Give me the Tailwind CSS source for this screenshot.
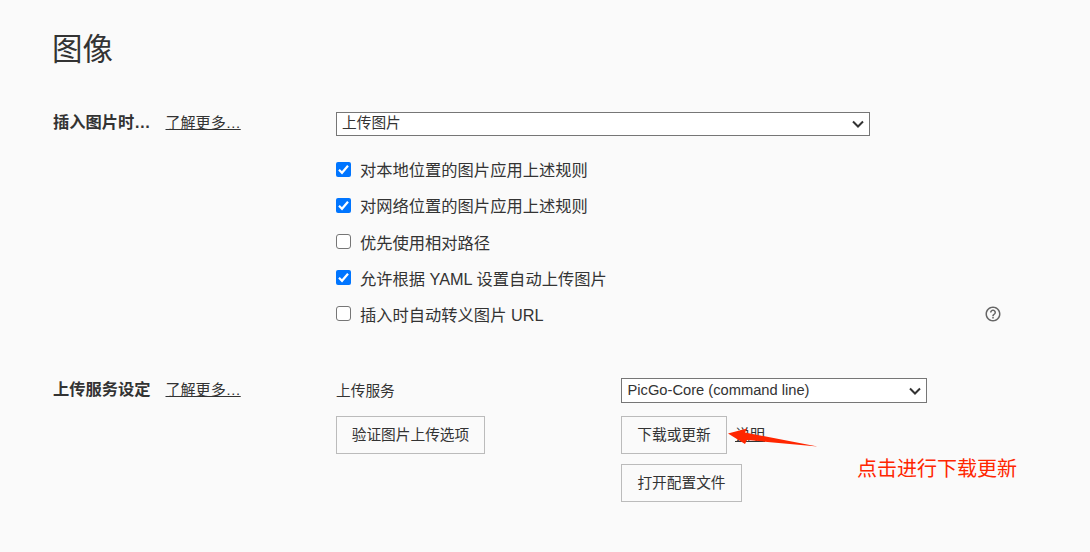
<!DOCTYPE html>
<html lang="zh-CN">
<head>
  <meta charset="UTF-8">
  <meta name="viewport" content="width=device-width, initial-scale=1.0">
  <title>图像</title>
  <script src="https://cdn.jsdelivr.net/npm/@tailwindcss/browser@4"></script>
</head>
<body class="relative h-screen overflow-hidden bg-[#fafafa] pl-[53px] pt-[26px] text-[#333] font-['Liberation_Sans','Noto_Sans_CJK_SC',sans-serif] font-normal">
  <h1 class="-ml-px h-[46px] text-[30.5px] leading-[46px]">图像</h1>

  <!-- Insert images -->
  <section class="mt-10 flex">
    <div class="-mt-px flex h-6 w-[283px] items-center">
      <h2 class="w-[98px] whitespace-nowrap pb-[2px] text-[16.25px] leading-[22px] font-bold">插入图片时…</h2>
      <a href="#" class="ml-[14.5px] text-[15.05px] leading-6 underline">了解更多…</a>
    </div>
    <div class="w-[666px]">
      <div class="flex h-6 w-[534px] items-center justify-between border border-[#767676] bg-white pl-[5px] pr-[5px] text-[14.7px]">
        <span class="pb-[2px]">上传图片</span>
        <svg class="h-3 w-3" viewBox="0 0 12 12" fill="none" stroke="#333" stroke-width="2"><path d="M1 3.5l5 5 5-5"/></svg>
      </div>
      <div class="mt-4 text-[16.28px]">
        <label class="flex h-9 items-center gap-[9px]">
          <svg class="-mt-[2px] h-[15px] w-[15px]" viewBox="0 0 15 15"><rect width="15" height="15" rx="2" fill="#0075ff"/><path d="M3 7.8l3 3 6-7" fill="none" stroke="#fff" stroke-width="2.2"/></svg>
          <span>对本地位置的图片应用上述规则</span>
        </label>
        <label class="flex h-9 items-center gap-[9px]">
          <svg class="-mt-[2px] h-[15px] w-[15px]" viewBox="0 0 15 15"><rect width="15" height="15" rx="2" fill="#0075ff"/><path d="M3 7.8l3 3 6-7" fill="none" stroke="#fff" stroke-width="2.2"/></svg>
          <span>对网络位置的图片应用上述规则</span>
        </label>
        <label class="flex h-9 items-center gap-[9px]">
          <span class="-mt-[2px] h-[15px] w-[15px] rounded-[3px] border border-[#767676] bg-white"></span>
          <span class="pt-[2px]">优先使用相对路径</span>
        </label>
        <label class="flex h-9 items-center gap-[9px]">
          <svg class="-mt-[2px] h-[15px] w-[15px]" viewBox="0 0 15 15"><rect width="15" height="15" rx="2" fill="#0075ff"/><path d="M3 7.8l3 3 6-7" fill="none" stroke="#fff" stroke-width="2.2"/></svg>
          <span class="pt-[2px]">允许根据 YAML 设置自动上传图片</span>
        </label>
        <div class="flex h-9 items-center justify-between">
          <label class="flex items-center gap-[9px]">
            <span class="h-[15px] w-[15px] rounded-[3px] border border-[#767676] bg-white"></span>
            <span class="pt-[2px]">插入时自动转义图片 URL</span>
          </label>
          <svg class="h-[18px] w-[18px]" viewBox="0 0 24 24" fill="#666"><path d="M11 18h2v-2h-2v2zm1-16C6.48 2 2 6.48 2 12s4.48 10 10 10 10-4.48 10-10S17.52 2 12 2zm0 18c-4.41 0-8-3.59-8-8s3.59-8 8-8 8 3.59 8 8-3.59 8-8 8zm0-14c-2.21 0-4 1.79-4 4h2c0-1.1.9-2 2-2s2 .9 2 2c0 2-3 1.75-3 5h2c0-2.25 3-2.5 3-5 0-2.21-1.79-4-4-4z"/></svg>
        </div>
      </div>
    </div>
  </section>

  <!-- Upload service -->
  <section class="mt-[46px] flex text-[14.7px]">
    <div class="flex h-6 w-[283px] items-center">
      <h2 class="w-[98px] whitespace-nowrap pb-[2px] text-[16.25px] leading-[22px] font-bold">上传服务设定</h2>
      <a href="#" class="ml-[14.5px] text-[15.05px] leading-6 underline">了解更多…</a>
    </div>
    <div class="w-[285px]">
      <p class="h-[25px] leading-[26px]">上传服务</p>
      <button class="mt-[13px] h-[38px] w-[149px] border border-[#bbb]">验证图片上传选项</button>
    </div>
    <div>
      <div class="flex h-[25px] w-[306px] items-center justify-between border border-[#767676] bg-white pl-[5.5px] pr-[5px]">
        <span>PicGo-Core (command line)</span>
        <svg class="h-3 w-3" viewBox="0 0 12 12" fill="none" stroke="#333" stroke-width="2"><path d="M1 3.5l5 5 5-5"/></svg>
      </div>
      <div class="mt-[13px] flex items-center gap-2">
        <button class="h-[38px] w-[106px] border border-[#bbb]">下载或更新</button>
        <a href="#" class="text-[15px] underline">说明</a>
      </div>
      <button class="mt-[10px] h-[38px] w-[121px] border border-[#bbb]">打开配置文件</button>
    </div>
  </section>

  <!-- Callout -->
  <svg class="absolute left-[728px] top-[428px] h-5 w-[90px]" viewBox="0 0 90 20" fill="#ff2600"><path d="M0 5.500L19 .5l-2 4L89.500 18.500 19 12 17 16z"/></svg>
  <p class="absolute left-[857px] top-[454px] text-xl leading-[30px] text-[#ff2600]">点击进行下载更新</p>
</body>
</html>
